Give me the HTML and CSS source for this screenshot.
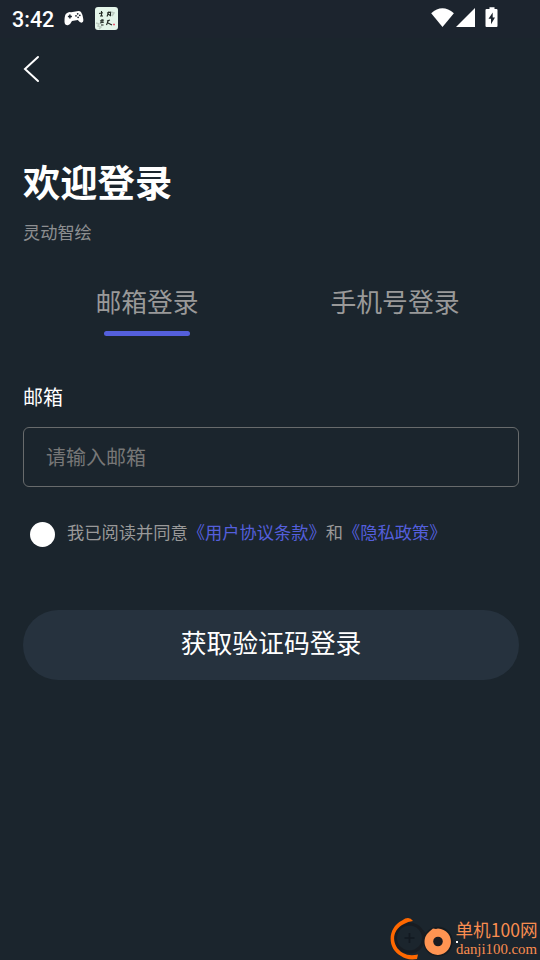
FILE: index.html
```html
<!DOCTYPE html>
<html lang="zh-CN">
<head>
<meta charset="utf-8">
<title>欢迎登录</title>
<link rel="stylesheet" href="styles.css">
</head>
<body>
<div class="screen">
  <header class="status">
    <span class="clock">3:42</span>
    <svg class="pad" width="20" height="15" viewBox="0 0 20 15">
      <path d="M4 1.500Q5.500.7 7 1.300L13 .3Q15.500-.3 17 1Q18.600 3 19.300 8.300Q19.600 11.500 17.500 11.700Q15.800 11.700 13.800 9.100L8 9.900Q6.200 13.800 3.900 14.200Q.8 14.400.5 11Q.3 5 2 2.800Z" fill="#fff"/>
      <path d="M5.900 3.500v4M3.900 5.500h4" stroke="#1c242e" stroke-width="1.500"/>
      <g fill="#1c242e"><circle cx="13.700" cy="2.800" r=".9"/><circle cx="12" cy="4.800" r=".9"/><circle cx="15.800" cy="4.300" r=".9"/><circle cx="14.100" cy="6.300" r=".9"/></g>
    </svg>
    <svg class="app" width="23" height="23" viewBox="0 0 23 23">
      <rect width="23" height="23" rx="3" fill="#e4f5ea"/>
      <path d="M1 16l3 1-1 2 3 1-2 2M16 5l3 1-2 3" fill="none" stroke="#bccbc1" stroke-width="1.500"/>
      <g fill="none" stroke="#202722" stroke-width="1.100"><path d="M4 6.500l4-.7M6.500 4v5M5 9h3M12 6l4-1M14 4.500l-2 5M13 7l3 2M15.500 5v3M5 14l4-1M7 12v3M5 16l4-1M6 18h2.500M12 14l3-1M13.500 13l-2 5M13 16l4 2"/></g>
      <path d="M18 17.500h2" stroke="#e85b72" stroke-width="1.300"/>
    </svg>
    <svg class="signals" width="68" height="22" viewBox="0 0 68 22">
      <path d="M.2 5.200Q11.300-4.500 22.900 5.200L11.500 19Z" fill="#fff"/>
      <path d="M44 0v19H25Z" fill="#fff"/>
      <path d="M58.500-.8h5v1.900h2q1 0 1 1V18q0 1-1 1h-10q-1 0-1-1V2.100q0-1 1-1h3Z" fill="#fff"/>
      <path d="M61.700 4.500L57.500 10.800h2.500v5.500l4-6.800h-2.300Z" fill="#1c242e"/>
    </svg>
  </header>
  <nav class="nav">
    <svg width="18" height="28" viewBox="0 0 18 28"><path d="M15 2L2 14L15 26" fill="none" stroke="#fff" stroke-width="2" stroke-linecap="round"/></svg>
  </nav>
  <main>
    <h1>欢迎登录</h1>
    <p class="subtitle">灵动智绘</p>
    <div class="tabs">
      <div class="tab active">邮箱登录</div>
      <div class="tab">手机号登录</div>
    </div>
    <label class="label" for="mail">邮箱</label>
    <input id="mail" class="field" type="text" placeholder="请输入邮箱">
    <div class="agree">
      <span class="radio"></span>
      <span class="terms">我已阅读并同意<a>《用户协议条款》</a>和<a>《隐私政策》</a></span>
    </div>
    <button class="submit">获取验证码登录</button>
  </main>
  <div class="mark">
    <svg width="150" height="43" viewBox="0 0 150 43">
      <circle cx="19.500" cy="21" r="14" fill="none" stroke="#171c22" stroke-width="3"/>
      <path d="M19.500 16v10M14.500 21h10" stroke="#121920" stroke-width="1.700"/>
      <path d="M32 14l5 6" stroke="#171c22" stroke-width="3"/>
      <path d="M23 4Q19-1.500 12 3.500C-3 11-3 32 11 39Q17 43.500 27 42L28 37.500Q19 39.500 13 36C1 29 1 13 14 7Q18 4.500 23 4Z" fill="#ff6800"/>
      <circle cx="48" cy="24.500" r="14.700" fill="#151b20"/>
      <path d="M40 14L43 11.500L46 12L48 11.500A13.200 13.200 0 1 1 37 17Z" fill="#ff9452"/>
      <circle cx="48" cy="24.500" r="4.800" fill="#1b1b20"/>
      <path d="M66 24h2v2h-2z" fill="#fff"/>
      <text class="mark-cn" x="65.500" y="19.500" textLength="82" lengthAdjust="spacingAndGlyphs">单机100网</text>
      <text class="mark-en" x="66" y="36.500" textLength="81" lengthAdjust="spacingAndGlyphs">danji100.com</text>
    </svg>
  </div>
</div>
</body>
</html>
```
FILE: styles.css
```css
* { box-sizing: border-box; }
body {
  margin: 0;
  background: #1b252d;
  color: #fff;
  font-family: "Noto Sans CJK SC", sans-serif;
}
.screen {
  position: relative;
  width: 540px;
  height: 960px;
  overflow: hidden;
}
.status {
  display: flex;
  align-items: flex-start;
  height: 38px;
  padding: 7px 41px 0 12px;
  background: #1c242e;
}
.status svg { overflow: visible; }
.clock {
  width: 52px;
  font: 500 21.500px/25px Roboto, sans-serif;
}
.pad { margin-top: 4px; }
.app { margin-left: 11px; }
.signals { margin: 1px 0 0 auto; }
.nav {
  height: 62px;
  padding: 17px 0 0 23px;
}
.nav svg { display: block; }
main { padding: 0 21px 0 23px; }
h1 {
  margin: 54px 0 0;
  font-size: 37.300px;
  line-height: 54px;
  font-weight: 700;
}
.subtitle {
  margin: 12px 0 0;
  font-size: 17.200px;
  line-height: 24px;
  color: #8d8f91;
}
.tabs {
  display: flex;
  height: 57px;
  margin-top: 35px;
}
.tab {
  flex: 1;
  display: flex;
  flex-direction: column;
  align-items: center;
  font-size: 25.800px;
  line-height: 44px;
  color: #999;
}
.active::after {
  content: "";
  width: 86px;
  height: 5px;
  margin-top: 8px;
  border-radius: 3px;
  background: #545fdc;
}
.label {
  display: block;
  margin-top: 46px;
  font-size: 20px;
  line-height: 30px;
}
.field {
  display: block;
  width: 496px;
  height: 60px;
  margin-top: 15px;
  padding: 0 22px 2px;
  border: 1px solid #686b6c;
  border-radius: 6px;
  background: transparent;
  color: #fff;
  font: 20px "Noto Sans CJK SC", sans-serif;
}
.field::placeholder { color: #777; }
.agree {
  display: flex;
  align-items: center;
  margin: 34px 0 0 7px;
  height: 26px;
  gap: 12px;
  font-size: 17.250px;
  line-height: 24px;
  color: #999;
}
.terms { padding-bottom: 4px; }
.radio {
  width: 25px;
  height: 25px;
  border-radius: 50%;
  background: #fff;
}
.agree a { color: #545fdc; }
.submit {
  display: block;
  width: 496px;
  height: 70px;
  margin-top: 63px;
  padding: 0 0 8px;
  border: 0;
  border-radius: 35px;
  background: #26323e;
  color: #fff;
  font: 25.800px "Noto Sans CJK SC", sans-serif;
}
.mark {
  position: absolute;
  right: 0;
  bottom: 0;
  width: 150px;
  height: 43px;
}
.mark svg { display: block; }
.mark text { fill: #f98d50; }
.mark-cn { font: 18px "Noto Sans CJK SC", sans-serif; }
.mark-en { font: 15px "Liberation Serif", serif; }
```
